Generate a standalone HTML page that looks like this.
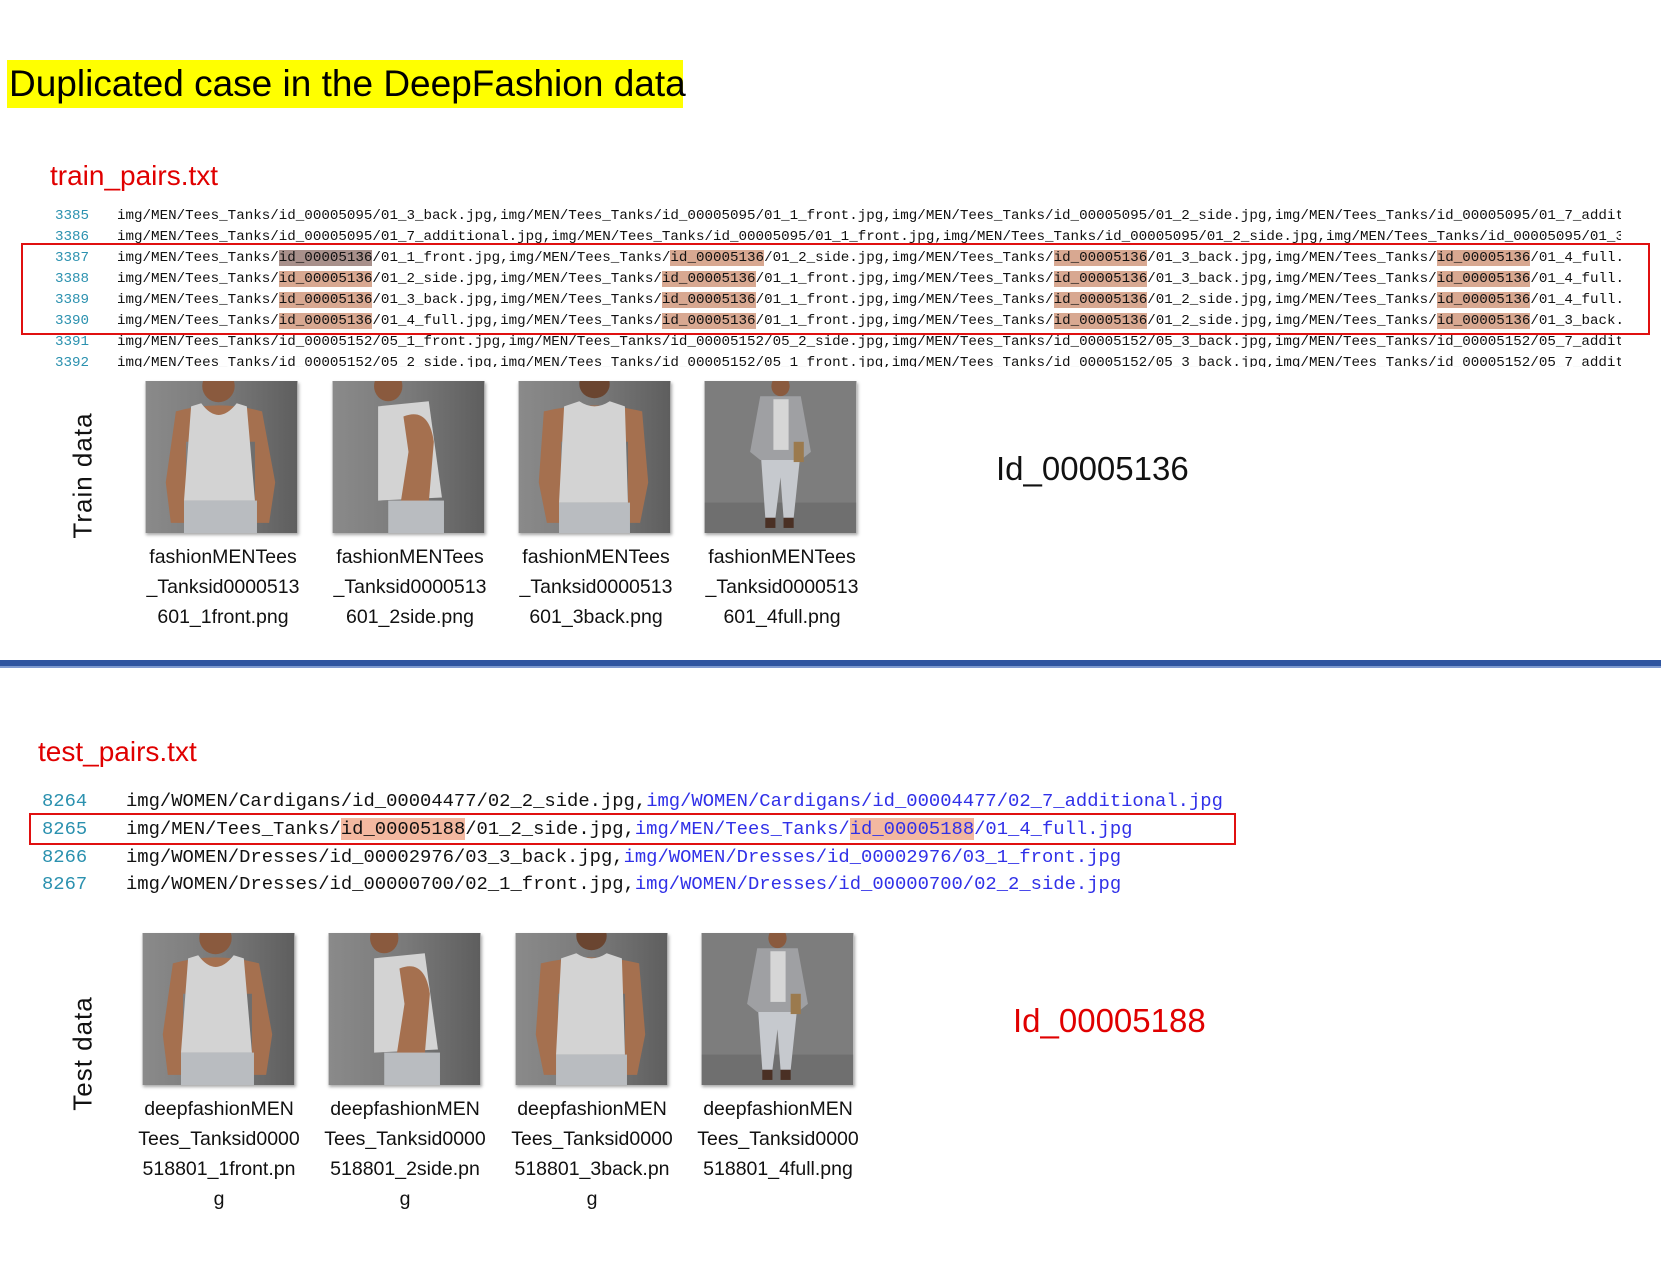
<!DOCTYPE html>
<html><head><meta charset="utf-8"><style>
*{margin:0;padding:0;box-sizing:border-box}
body{width:1661px;height:1283px;background:#fff;position:relative;overflow:hidden;font-family:"Liberation Sans",sans-serif}
.a{position:absolute;white-space:nowrap}
.code{position:absolute;left:0;width:1621px;overflow:hidden;font-family:"Liberation Mono",monospace;white-space:pre}
.tr{font-size:14.2px;height:21px;line-height:21px}
.tr .n{position:absolute;left:55px;color:#2b91af}
.tr .t{position:absolute;left:117px;color:#111}
.h{background:#d8a891}
.h0{background:#a8908b}
.te{font-size:18.85px;height:27px;line-height:27px;width:1300px}
.te .n{position:absolute;left:42px;color:#2b91af}
.te .t{position:absolute;left:126px;color:#111}
.b{color:#3030e8}
.h2{background:#f3b8a0}
.ph{position:absolute;width:153px;height:152px;box-shadow:1px 2px 3px rgba(0,0,0,.35)}
.cap{position:absolute;width:170px;text-align:center;font-size:19.5px;color:#111;line-height:30px}
.rot{position:absolute;transform:rotate(-90deg);transform-origin:center;font-size:26px;letter-spacing:1px;color:#111;white-space:nowrap}
</style></head><body>
<svg width="0" height="0" style="position:absolute">
<defs>
<linearGradient id="bg" x1="0" x2="1"><stop offset="0" stop-color="#8a8a8a"/><stop offset=".5" stop-color="#7a7a7a"/><stop offset="1" stop-color="#5e5e5e"/></linearGradient>
<symbol id="front" viewBox="0 0 150 150"><rect width="150" height="150" fill="url(#bg)"/><ellipse cx="72" cy="5" rx="16" ry="16" fill="#8a5a3e"/><path d="M30 30 Q72 18 115 30 L128 100 L122 140 L108 140 L108 60 L40 60 L40 140 L25 140 L20 100Z" fill="#a5704f"/><path d="M45 25 L55 22 Q72 45 90 22 L100 25 L108 118 L38 118Z" fill="#d3d3d3"/><rect x="38" y="118" width="72" height="32" fill="#b9bcc0"/></symbol>
<symbol id="side" viewBox="0 0 150 150"><rect width="150" height="150" fill="url(#bg)"/><ellipse cx="55" cy="5" rx="14" ry="15" fill="#8a5a3e"/><path d="M45 25 L95 20 L108 115 L45 118Z" fill="#d3d3d3"/><path d="M70 35 Q95 25 100 60 L95 120 L85 140 L65 135 L75 70Z" fill="#a5704f"/><rect x="55" y="118" width="55" height="32" fill="#b9bcc0"/></symbol>
<symbol id="back" viewBox="0 0 150 150"><rect width="150" height="150" fill="url(#bg)"/><ellipse cx="75" cy="3" rx="15" ry="14" fill="#6a4530"/><path d="M25 30 Q75 18 122 30 L128 100 L120 140 L108 140 L108 60 L42 60 L42 140 L28 140 L20 100Z" fill="#a5704f"/><path d="M45 25 L60 20 Q75 30 90 20 L105 25 L108 120 L40 120Z" fill="#d3d3d3"/><rect x="40" y="120" width="70" height="30" fill="#b9bcc0"/></symbol>
<symbol id="full" viewBox="0 0 150 150"><rect width="150" height="150" fill="#7d7d7d"/><rect y="120" width="150" height="30" fill="#6f6f6f"/><ellipse cx="75" cy="5" rx="9" ry="10" fill="#8a5a3e"/><path d="M55 15 L95 15 L105 70 L95 78 L55 78 L45 70Z" fill="#9fa0a3"/><rect x="68" y="18" width="15" height="50" fill="#d6d6d6"/><path d="M56 78 L94 78 L88 135 L78 135 L75 95 L70 135 L60 135Z" fill="#c6c9ce"/><rect x="60" y="135" width="10" height="10" fill="#4a3024"/><rect x="78" y="135" width="10" height="10" fill="#4a3024"/><rect x="88" y="60" width="10" height="20" fill="#9b7a4e"/></symbol>
</defs></svg>

<div class="a" style="left:7px;top:60px;width:676px;height:48px;background:#ffff00"></div>
<div class="a" style="left:9px;top:63px;font-size:37px;line-height:42px;color:#000">Duplicated case in the DeepFashion data</div>

<div class="a" style="left:50px;top:160px;font-size:28px;color:#e00000">train_pairs.txt</div>

<div class="code tr" style="top:206px"><span class="n">3385</span><span class="t">img/MEN/Tees_Tanks/id_00005095/01_3_back.jpg,img/MEN/Tees_Tanks/id_00005095/01_1_front.jpg,img/MEN/Tees_Tanks/id_00005095/01_2_side.jpg,img/MEN/Tees_Tanks/id_00005095/01_7_addit</span></div>
<div class="code tr" style="top:227px"><span class="n">3386</span><span class="t">img/MEN/Tees_Tanks/id_00005095/01_7_additional.jpg,img/MEN/Tees_Tanks/id_00005095/01_1_front.jpg,img/MEN/Tees_Tanks/id_00005095/01_2_side.jpg,img/MEN/Tees_Tanks/id_00005095/01_3</span></div>
<div class="code tr" style="top:248px"><span class="n">3387</span><span class="t">img/MEN/Tees_Tanks/<span class="h0">id_00005136</span>/01_1_front.jpg,img/MEN/Tees_Tanks/<span class="h">id_00005136</span>/01_2_side.jpg,img/MEN/Tees_Tanks/<span class="h">id_00005136</span>/01_3_back.jpg,img/MEN/Tees_Tanks/<span class="h">id_00005136</span>/01_4_full.</span></div>
<div class="code tr" style="top:269px"><span class="n">3388</span><span class="t">img/MEN/Tees_Tanks/<span class="h">id_00005136</span>/01_2_side.jpg,img/MEN/Tees_Tanks/<span class="h">id_00005136</span>/01_1_front.jpg,img/MEN/Tees_Tanks/<span class="h">id_00005136</span>/01_3_back.jpg,img/MEN/Tees_Tanks/<span class="h">id_00005136</span>/01_4_full.</span></div>
<div class="code tr" style="top:290px"><span class="n">3389</span><span class="t">img/MEN/Tees_Tanks/<span class="h">id_00005136</span>/01_3_back.jpg,img/MEN/Tees_Tanks/<span class="h">id_00005136</span>/01_1_front.jpg,img/MEN/Tees_Tanks/<span class="h">id_00005136</span>/01_2_side.jpg,img/MEN/Tees_Tanks/<span class="h">id_00005136</span>/01_4_full.</span></div>
<div class="code tr" style="top:311px"><span class="n">3390</span><span class="t">img/MEN/Tees_Tanks/<span class="h">id_00005136</span>/01_4_full.jpg,img/MEN/Tees_Tanks/<span class="h">id_00005136</span>/01_1_front.jpg,img/MEN/Tees_Tanks/<span class="h">id_00005136</span>/01_2_side.jpg,img/MEN/Tees_Tanks/<span class="h">id_00005136</span>/01_3_back.</span></div>
<div class="code tr" style="top:332px"><span class="n">3391</span><span class="t">img/MEN/Tees_Tanks/id_00005152/05_1_front.jpg,img/MEN/Tees_Tanks/id_00005152/05_2_side.jpg,img/MEN/Tees_Tanks/id_00005152/05_3_back.jpg,img/MEN/Tees_Tanks/id_00005152/05_7_addit</span></div>
<div class="code tr" style="top:353px;height:14px"><span class="n">3392</span><span class="t">img/MEN/Tees_Tanks/id_00005152/05_2_side.jpg,img/MEN/Tees_Tanks/id_00005152/05_1_front.jpg,img/MEN/Tees_Tanks/id_00005152/05_3_back.jpg,img/MEN/Tees_Tanks/id_00005152/05_7_addit</span></div>
<div class="a" style="left:21px;top:243px;width:1629px;height:92px;border:2px solid #e01010"></div>

<svg class="ph" style="left:145px;top:381px"><use href="#front"/></svg>
<svg class="ph" style="left:332px;top:381px"><use href="#side"/></svg>
<svg class="ph" style="left:518px;top:381px"><use href="#back"/></svg>
<svg class="ph" style="left:704px;top:381px"><use href="#full"/></svg>
<div class="cap" style="left:138px;top:542px">fashionMENTees<br>_Tanksid0000513<br>601_1front.png</div>
<div class="cap" style="left:325px;top:542px">fashionMENTees<br>_Tanksid0000513<br>601_2side.png</div>
<div class="cap" style="left:511px;top:542px">fashionMENTees<br>_Tanksid0000513<br>601_3back.png</div>
<div class="cap" style="left:697px;top:542px">fashionMENTees<br>_Tanksid0000513<br>601_4full.png</div>
<div class="rot" style="left:18px;top:460px;width:130px;text-align:center">Train data</div>
<div class="a" style="left:996px;top:450px;font-size:33px;color:#111">Id_00005136</div>

<div class="a" style="left:0;top:660px;width:1661px;height:8px;background:#2f55a0;border-bottom:2px solid #7f9bd0"></div>

<div class="a" style="left:38px;top:736px;font-size:28px;color:#e00000">test_pairs.txt</div>

<div class="code te" style="top:788px"><span class="n">8264</span><span class="t">img/WOMEN/Cardigans/id_00004477/02_2_side.jpg,<span class="b">img/WOMEN/Cardigans/id_00004477/02_7_additional.jpg</span></span></div>
<div class="code te" style="top:816px"><span class="n">8265</span><span class="t">img/MEN/Tees_Tanks/<span class="h2">id_00005188</span>/01_2_side.jpg,<span class="b">img/MEN/Tees_Tanks/<span class="h2">id_00005188</span>/01_4_full.jpg</span></span></div>
<div class="code te" style="top:844px"><span class="n">8266</span><span class="t">img/WOMEN/Dresses/id_00002976/03_3_back.jpg,<span class="b">img/WOMEN/Dresses/id_00002976/03_1_front.jpg</span></span></div>
<div class="code te" style="top:871px"><span class="n">8267</span><span class="t">img/WOMEN/Dresses/id_00000700/02_1_front.jpg,<span class="b">img/WOMEN/Dresses/id_00000700/02_2_side.jpg</span></span></div>
<div class="a" style="left:29px;top:813px;width:1207px;height:32px;border:2px solid #e01010"></div>

<svg class="ph" style="left:142px;top:933px"><use href="#front"/></svg>
<svg class="ph" style="left:328px;top:933px"><use href="#side"/></svg>
<svg class="ph" style="left:515px;top:933px"><use href="#back"/></svg>
<svg class="ph" style="left:701px;top:933px"><use href="#full"/></svg>
<div class="cap" style="left:134px;top:1094px">deepfashionMEN<br>Tees_Tanksid0000<br>518801_1front.pn<br>g</div>
<div class="cap" style="left:320px;top:1094px">deepfashionMEN<br>Tees_Tanksid0000<br>518801_2side.pn<br>g</div>
<div class="cap" style="left:507px;top:1094px">deepfashionMEN<br>Tees_Tanksid0000<br>518801_3back.pn<br>g</div>
<div class="cap" style="left:693px;top:1094px">deepfashionMEN<br>Tees_Tanksid0000<br>518801_4full.png</div>
<div class="rot" style="left:18px;top:1038px;width:130px;text-align:center">Test data</div>
<div class="a" style="left:1013px;top:1002px;font-size:33px;color:#e00000">Id_00005188</div>
</body></html>
